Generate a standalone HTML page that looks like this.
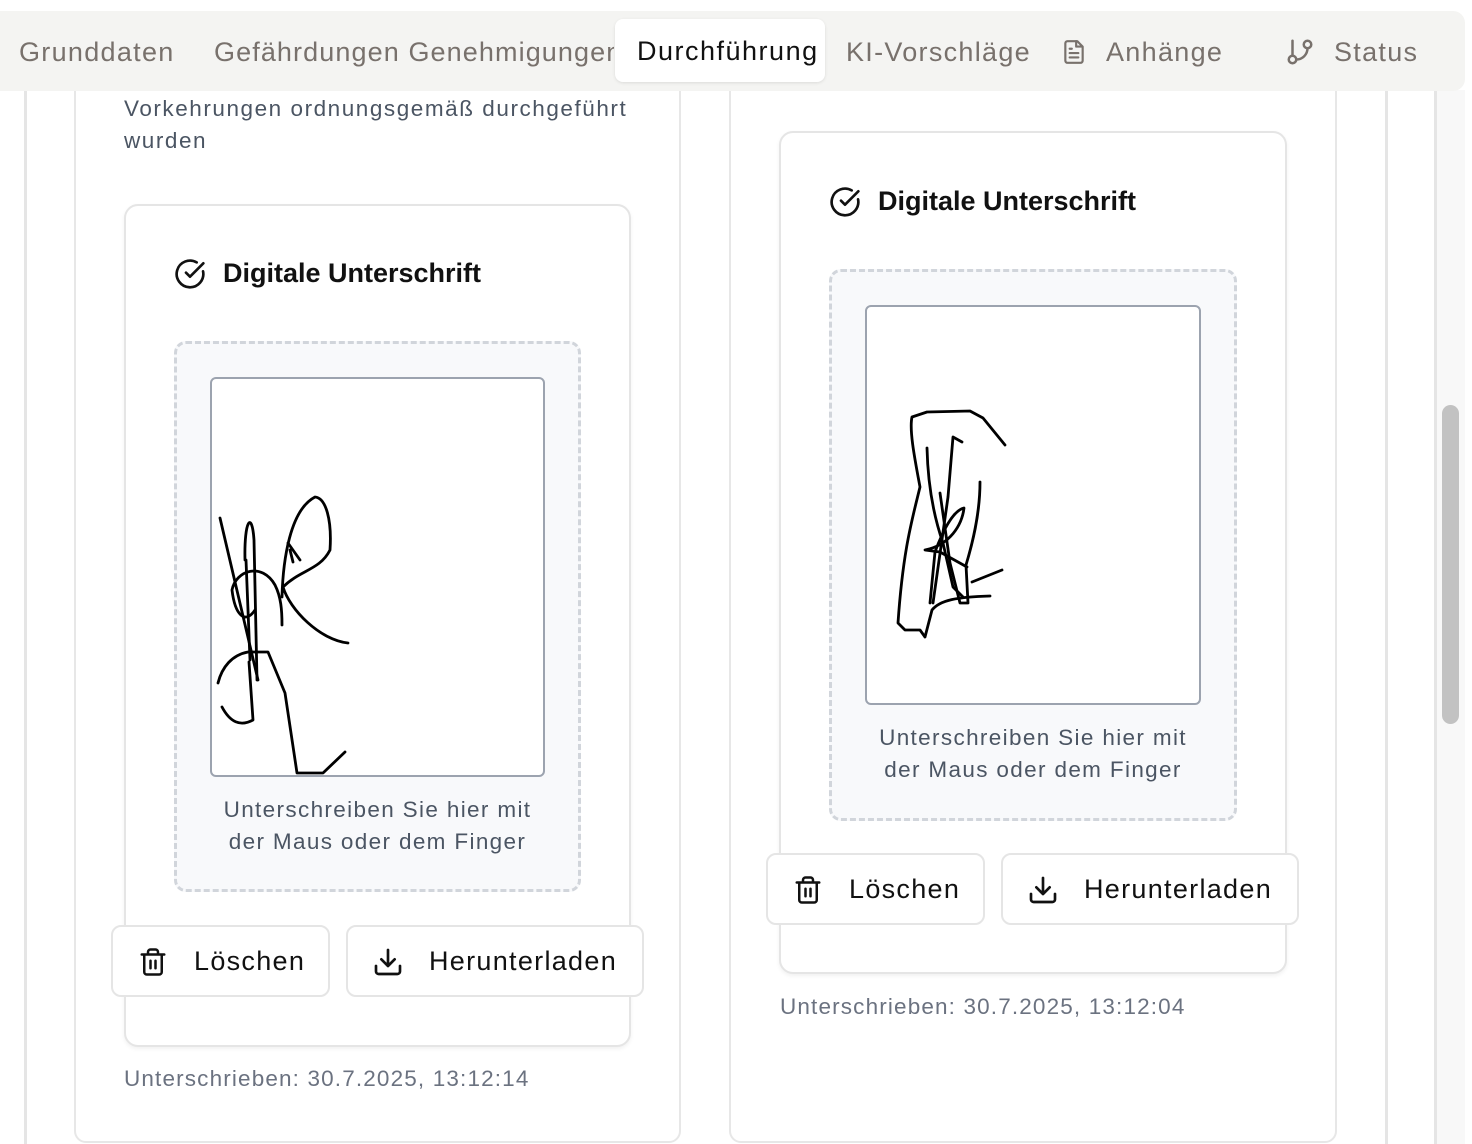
<!DOCTYPE html>
<html><head><meta charset="utf-8"><style>
*{box-sizing:border-box;margin:0;padding:0}
body{width:1472px;height:1144px;overflow:hidden;background:#fff;position:relative;font-family:"Liberation Sans",Arial,sans-serif}
.a{position:absolute}
.tabs{left:0;top:11px;width:1465px;height:80px;background:#f4f4f2;border-radius:0 12px 12px 0;z-index:5}
.tab{position:absolute;top:37px;font-size:27px;color:#78716c;white-space:nowrap;letter-spacing:1.3px}
.act{left:615px;top:8px;width:210px;height:63px;background:#fff;border-radius:8px;box-shadow:0 1px 3px rgba(0,0,0,.1);font-size:27px;color:#111;padding:17px 0 0 22px;letter-spacing:1.5px;white-space:nowrap}
.vl{width:3px;background:#e5e5e5}
.card{border:2px solid #e7e7e7;border-radius:12px;background:#fff}
.sig{border:2px solid #e5e5e5;border-radius:14px;background:#fff;box-shadow:0 2px 4px rgba(0,0,0,.06)}
.title{font-size:27px;font-weight:bold;color:#111}
.dash{border:3px dashed #d1d5db;border-radius:12px;background:#f8f9fb}
.canvas{border:2px solid #9ca3af;border-radius:6px;background:#fff}
.hint{font-size:22.5px;color:#4b5563;text-align:center;line-height:32px;letter-spacing:1.35px}
.btn{border:2px solid #e5e5e5;border-radius:10px;background:#fff;font-size:27px;color:#111}
.btn span{position:absolute;top:19px;letter-spacing:1.3px}
.foot{font-size:22.5px;color:#6b7280;letter-spacing:1.15px}
</style></head><body>
<div class="a vl" style="left:24px;top:90px;height:1054px"></div>
<div class="a vl" style="left:1385px;top:90px;height:1054px"></div>
<div class="a vl" style="left:1434px;top:90px;height:1054px"></div>
<div class="a" style="left:1437px;top:90px;width:28px;height:1054px;background:#f8f8f8"></div>
<div class="a" style="left:1442px;top:405px;width:17px;height:319px;background:#c2c2c2;border-radius:9px"></div>

<div class="a card" style="left:74px;top:40px;width:607px;height:1103px"></div>
<div class="a card" style="left:729px;top:40px;width:608px;height:1103px"></div>

<div class="a" style="left:124px;top:93px;font-size:22.5px;color:#4b5563;line-height:32px;letter-spacing:1.55px">Vorkehrungen ordnungsgemäß durchgeführt<br>wurden</div>

<!-- left sig card -->
<div class="a sig" style="left:124px;top:204px;width:507px;height:843px"></div>
<svg class="a" style="left:174px;top:258px" width="32" height="32" viewBox="0 0 24 24" fill="none" stroke="#111" stroke-width="2" stroke-linecap="round" stroke-linejoin="round"><path d="M21.8 10A10 10 0 1 1 17 3.3"/><path d="m9 11 3 3L22 4"/></svg>
<div class="a title" style="left:223px;top:258px">Digitale Unterschrift</div>
<div class="a dash" style="left:174px;top:341px;width:407px;height:551px"></div>
<div class="a canvas" style="left:210px;top:377px;width:335px;height:400px"></div>
<div class="a hint" style="left:174px;top:794px;width:407px">Unterschreiben Sie hier mit<br>der Maus oder dem Finger</div>
<div class="a btn" style="left:111px;top:925px;width:219px;height:72px"><svg class="a" style="left:25px;top:19px" width="30" height="32" viewBox="0 0 24 24" fill="none" stroke="#111" stroke-width="2" stroke-linecap="round" stroke-linejoin="round"><path d="M3 6h18M19 6v14a2 2 0 0 1-2 2H7a2 2 0 0 1-2-2V6M8 6V4a2 2 0 0 1 2-2h4a2 2 0 0 1 2 2v2M10 11v6M14 11v6"/></svg><span style="left:81px">Löschen</span></div>
<div class="a btn" style="left:346px;top:925px;width:298px;height:72px"><svg class="a" style="left:24px;top:19px" width="32" height="32" viewBox="0 0 24 24" fill="none" stroke="#111" stroke-width="2" stroke-linecap="round" stroke-linejoin="round"><path d="M21 15v4a2 2 0 0 1-2 2H5a2 2 0 0 1-2-2v-4M7 10l5 5 5-5M12 15V3"/></svg><span style="left:81px">Herunterladen</span></div>
<div class="a foot" style="left:124px;top:1066px">Unterschrieben: 30.7.2025, 13:12:14</div>

<!-- right sig card -->
<div class="a sig" style="left:779px;top:131px;width:508px;height:843px"></div>
<svg class="a" style="left:829px;top:186px" width="32" height="32" viewBox="0 0 24 24" fill="none" stroke="#111" stroke-width="2" stroke-linecap="round" stroke-linejoin="round"><path d="M21.8 10A10 10 0 1 1 17 3.3"/><path d="m9 11 3 3L22 4"/></svg>
<div class="a title" style="left:878px;top:186px">Digitale Unterschrift</div>
<div class="a dash" style="left:829px;top:269px;width:408px;height:552px"></div>
<div class="a canvas" style="left:865px;top:305px;width:336px;height:400px"></div>
<div class="a hint" style="left:829px;top:722px;width:408px">Unterschreiben Sie hier mit<br>der Maus oder dem Finger</div>
<div class="a btn" style="left:766px;top:853px;width:219px;height:72px"><svg class="a" style="left:25px;top:19px" width="30" height="32" viewBox="0 0 24 24" fill="none" stroke="#111" stroke-width="2" stroke-linecap="round" stroke-linejoin="round"><path d="M3 6h18M19 6v14a2 2 0 0 1-2 2H7a2 2 0 0 1-2-2V6M8 6V4a2 2 0 0 1 2-2h4a2 2 0 0 1 2 2v2M10 11v6M14 11v6"/></svg><span style="left:81px">Löschen</span></div>
<div class="a btn" style="left:1001px;top:853px;width:298px;height:72px"><svg class="a" style="left:24px;top:19px" width="32" height="32" viewBox="0 0 24 24" fill="none" stroke="#111" stroke-width="2" stroke-linecap="round" stroke-linejoin="round"><path d="M21 15v4a2 2 0 0 1-2 2H5a2 2 0 0 1-2-2v-4M7 10l5 5 5-5M12 15V3"/></svg><span style="left:81px">Herunterladen</span></div>
<div class="a foot" style="left:780px;top:994px">Unterschrieben: 30.7.2025, 13:12:04</div>

<!-- signature strokes -->
<svg class="a" style="left:0;top:0" width="1472" height="1144" fill="none" stroke="#000" stroke-width="2.8" stroke-linecap="round" stroke-linejoin="round">
<path d="M220 518 L258 680"/>
<path d="M245 560 C244 520 252 510 254 540 L257 680 M246 560 L250 660"/>
<path d="M255 610 C245 625 235 615 232 590 C236 570 262 562 275 585 C281 597 282 610 282 625"/>
<path d="M282 597 C283 560 290 510 315 497 C326 498 332 520 330 550 C320 570 300 570 283 587 C290 610 320 640 348 643"/>
<path d="M288 543 L300 560 M290 550 L293 562"/>
<path d="M218 683 C222 667 232 655 248 652 L268 652 L285 693 L297 773 L323 773 L345 752"/>
<path d="M222 707 C230 722 240 727 253 720 L249 662"/>
<path d="M1005 445 L983 418 L970 411 L927 412 L912 417 C909 430 915 460 920 487 C912 520 903 550 898 623 L905 630 L920 630 L925 637 L932 610 C940 600 957 597 990 596"/>
<path d="M927 448 C928 490 935 520 943 543 L953 587 L963 597"/>
<path d="M962 442 L953 437 L948 497 L933 603"/>
<path d="M940 493 L950 563 L960 603 L968 603 L966 565 C972 545 980 515 980 482"/>
<path d="M930 603 L935 552 C945 525 955 510 964 508 C962 525 950 545 925 550 L940 552 L967 567"/>
<path d="M972 582 L1002 570"/>
</svg>

<!-- tabs -->
<div class="a tabs">
<div class="tab" style="left:19px;top:26px">Grunddaten</div>
<div class="tab" style="left:214px;top:26px;width:400px;overflow:hidden;letter-spacing:1.1px">Gefährdungen Genehmigungen</div>
<div class="a act">Durchführung</div>
<div class="tab" style="left:846px;top:26px">KI-Vorschläge</div>
<svg class="a" style="left:1061px;top:26px" width="26" height="30" viewBox="0 0 24 24" fill="none" stroke="#78716c" stroke-width="2" stroke-linecap="round" stroke-linejoin="round"><path d="M15 2H6a2 2 0 0 0-2 2v16a2 2 0 0 0 2 2h12a2 2 0 0 0 2-2V7z"/><path d="M14 2v5h5M8 13h8M8 17h8M8 9h2"/></svg>
<div class="tab" style="left:1106px;top:26px">Anhänge</div>
<svg class="a" style="left:1285px;top:25px" width="30" height="32" viewBox="0 0 24 24" fill="none" stroke="#78716c" stroke-width="2" stroke-linecap="round" stroke-linejoin="round"><path d="M6 3v12"/><circle cx="18" cy="6" r="3"/><circle cx="6" cy="18" r="3"/><path d="M18 9a9 9 0 0 1-9 9"/></svg>
<div class="tab" style="left:1334px;top:26px">Status</div>
</div>
</body></html>
